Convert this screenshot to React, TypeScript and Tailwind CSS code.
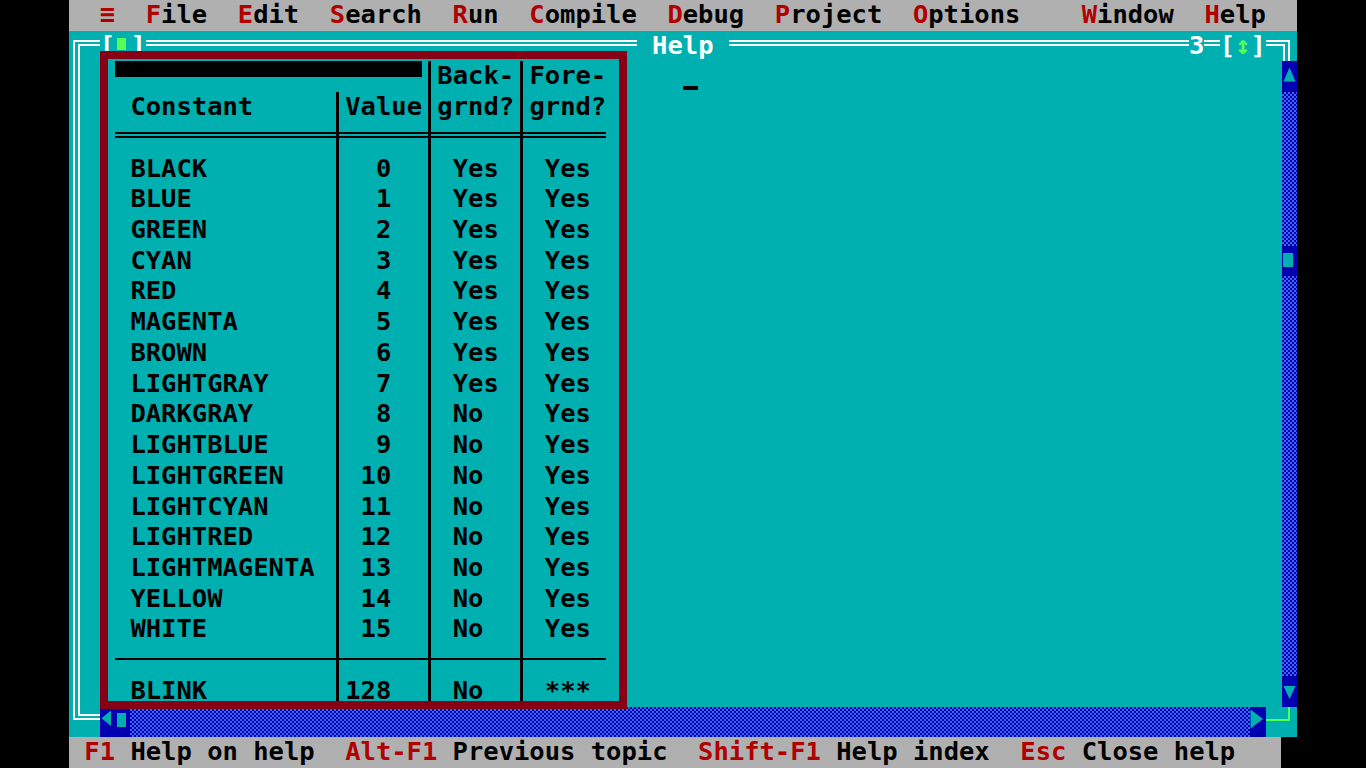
import React from "react";

const menu = [
  { col: "col-start-6 col-end-10", hot: "F", rest: "ile" },
  { col: "col-start-12 col-end-16", hot: "E", rest: "dit" },
  { col: "col-start-18 col-end-24", hot: "S", rest: "earch" },
  { col: "col-start-26 col-end-29", hot: "R", rest: "un" },
  { col: "col-start-31 col-end-38", hot: "C", rest: "ompile" },
  { col: "col-start-40 col-end-45", hot: "D", rest: "ebug" },
  { col: "col-start-47 col-end-54", hot: "P", rest: "roject" },
  { col: "col-start-56 col-end-63", hot: "O", rest: "ptions" },
  { col: "col-start-67 col-end-73", hot: "W", rest: "indow" },
  { col: "col-start-75 col-end-79", hot: "H", rest: "elp" },
];

const keys = [
  { kc: "col-start-2 col-end-4", k: "F1", lc: "col-start-5 col-end-17", l: "Help on help" },
  { kc: "col-start-19 col-end-25", k: "Alt-F1", lc: "col-start-26 col-end-40", l: "Previous topic" },
  { kc: "col-start-42 col-end-50", k: "Shift-F1", lc: "col-start-51 col-end-61", l: "Help index" },
  { kc: "col-start-63 col-end-66", k: "Esc", lc: "col-start-67 col-end-77", l: "Close help" },
];

const colors: [string, string, string, string][] = [
  ["BLACK", "0", "Yes", "Yes"],
  ["BLUE", "1", "Yes", "Yes"],
  ["GREEN", "2", "Yes", "Yes"],
  ["CYAN", "3", "Yes", "Yes"],
  ["RED", "4", "Yes", "Yes"],
  ["MAGENTA", "5", "Yes", "Yes"],
  ["BROWN", "6", "Yes", "Yes"],
  ["LIGHTGRAY", "7", "Yes", "Yes"],
  ["DARKGRAY", "8", "No", "Yes"],
  ["LIGHTBLUE", "9", "No", "Yes"],
  ["LIGHTGREEN", "10", "No", "Yes"],
  ["LIGHTCYAN", "11", "No", "Yes"],
  ["LIGHTRED", "12", "No", "Yes"],
  ["LIGHTMAGENTA", "13", "No", "Yes"],
  ["YELLOW", "14", "No", "Yes"],
  ["WHITE", "15", "No", "Yes"],
];

// one text-mode row: 80 character cells
const ROW = "grid h-[30.72px] grid-cols-[repeat(80,15.35px)] grid-rows-[30.72px]";
const CHECKER =
  "bg-[#0000b0] bg-[image:repeating-conic-gradient(#3868f0_0_25%,transparent_0_50%)] bg-[length:4px_4px] bg-size-[4px_4px]";

function MenuBar() {
  return (
    <div className={`${ROW} bg-[#b0b0b0] text-black`}>
      <span className="col-start-3 col-end-5 row-start-1 text-[#b00000]">≡</span>
      {menu.map((m) => (
        <span key={m.hot + m.rest} className={`${m.col} row-start-1 whitespace-pre`}>
          <span className="text-[#b00000]">{m.hot}</span>
          {m.rest}
        </span>
      ))}
    </div>
  );
}

function TopBorder() {
  return (
    <div className={`${ROW} text-white`}>
      <div className="col-start-1 row-start-1 flex flex-col pl-[4px] pt-[9.5px]">
        <div className="flex flex-1 flex-col border-l-2 border-t-2 border-white pl-[3px] pt-[2px]">
          <div className="flex-1 border-l-2 border-t-2 border-white" />
        </div>
      </div>
      <div className="col-start-2 col-end-80 row-start-1 mt-[9.5px] h-[6px] border-y-2 border-white" />
      <span className="col-start-3 row-start-1 bg-[#00b0b0]">[</span>
      <div className="col-start-4 row-start-1 bg-[#00b0b0] pl-[2px] pt-[7px]">
        <div className="h-[12px] w-[9px] bg-[#55ff55]" />
      </div>
      <span className="col-start-5 row-start-1 bg-[#00b0b0]">]</span>
      <span className="col-start-38 col-end-44 row-start-1 whitespace-pre bg-[#00b0b0]"> Help </span>
      <span className="col-start-74 row-start-1 bg-[#00b0b0]">3</span>
      <span className="col-start-76 row-start-1 bg-[#00b0b0]">[</span>
      <span className="col-start-77 row-start-1 bg-[#00b0b0] text-[#55ff55]">↕</span>
      <span className="col-start-78 row-start-1 bg-[#00b0b0]">]</span>
      <div className="col-start-80 row-start-1 flex flex-col pt-[9.5px]">
        <div className="flex w-[9px] flex-1 flex-col border-r-2 border-t-2 border-white pt-[2px]">
          <div className="w-[4px] flex-1 border-r-2 border-t-2 border-white" />
        </div>
      </div>
    </div>
  );
}

function VLine({ on = true }: { on?: boolean }) {
  return (
    <div className="flex w-[15.35px] shrink-0 pl-[6px]">
      {on && <div className="w-[3px] bg-black" />}
    </div>
  );
}

function Cells({
  a,
  b,
  c,
  d,
  l1 = true,
  header = false,
}: {
  a?: string;
  b?: string;
  c?: string;
  d?: string;
  l1?: boolean;
  header?: boolean;
}) {
  return (
    <div className="col-start-1 row-start-1 flex whitespace-pre">
      <div className="w-[214.9px] shrink-0 pl-[15.35px]">{a}</div>
      <VLine on={l1} />
      <div className={header ? "w-[76.75px] shrink-0" : "w-[76.75px] shrink-0 pr-[30.7px] text-right"}>{b}</div>
      <VLine />
      <div className={header ? "w-[76.75px] shrink-0" : "w-[76.75px] shrink-0 pl-[15.35px]"}>{c}</div>
      <VLine />
      <div className={header ? "w-[76.75px] shrink-0" : "w-[76.75px] shrink-0 pl-[15.35px]"}>{d}</div>
    </div>
  );
}

function Table() {
  return (
    <div className="flex w-[491.2px] shrink-0 flex-col text-black">
      <div className="grid h-[30.72px] grid-cols-1 grid-rows-[30.72px]">
        <div className="col-start-1 row-start-1 h-[15.36px] w-[307px] bg-black" />
        <Cells header l1={false} c="Back-" d="Fore-" />
      </div>
      <div className="grid h-[30.72px] grid-cols-1 grid-rows-[30.72px]">
        <Cells header a="Constant" b="Value" c="grnd?" d="grnd?" />
      </div>
      <div className="grid h-[30.72px] grid-cols-1 grid-rows-[30.72px]">
        <div className="col-start-1 row-start-1 mt-[9px] h-[6px] border-y-2 border-black" />
        <Cells />
      </div>
      {colors.map(([n, v, bg, fg]) => (
        <div key={n} className="grid h-[30.72px] grid-cols-1 grid-rows-[30.72px]">
          <Cells a={n} b={v} c={bg} d={fg} />
        </div>
      ))}
      <div className="grid h-[30.72px] grid-cols-1 grid-rows-[30.72px]">
        <div className="col-start-1 row-start-1 mt-[13px] h-[2px] bg-black" />
        <Cells />
      </div>
      <div className="grid h-[30.72px] grid-cols-1 grid-rows-[30.72px]">
        <Cells a="BLINK" b="128" c="No" d="***" />
      </div>
    </div>
  );
}

function VScroll() {
  return (
    <div className="flex w-[15.35px] shrink-0 flex-col">
      <div className="h-[30.72px] bg-[#0000b0]">
        <svg width="15" height="30" viewBox="0 0 15 30">
          <polygon points="1.5,20.5 13.5,20.5 7.5,6.5" fill="#00b0b0" />
        </svg>
      </div>
      <div className={`h-[153.6px] ${CHECKER}`} />
      <div className="h-[30.72px] bg-[#0000b0] pl-[1.5px] pt-[7px]">
        <div className="h-[14px] w-[10px] bg-[#00b0b0]" />
      </div>
      <div className={`flex-1 ${CHECKER}`} />
      <div className="h-[30.72px] bg-[#0000b0]">
        <svg width="15" height="30" viewBox="0 0 15 30">
          <polygon points="1.5,10 13.5,10 7.5,23" fill="#00b0b0" />
        </svg>
      </div>
    </div>
  );
}

function BottomBorder() {
  return (
    <div className={ROW}>
      <div className="col-start-1 row-start-1 pl-[4px]">
        <div className="h-[13.5px] border-b-2 border-l-2 border-white pl-[3px]">
          <div className="h-[9.5px] border-b-2 border-l-2 border-white" />
        </div>
      </div>
      <div className="col-start-2 row-start-1 mt-[7.5px] h-[6px] border-y-2 border-white" />
      <div className="col-start-3 row-start-1 bg-[#0000b0]">
        <svg width="15" height="30" viewBox="0 0 15 30">
          <polygon points="11,3.5 11,19 1.5,11.25" fill="#00b0b0" />
        </svg>
      </div>
      <div className="col-start-4 row-start-1 bg-[#0000b0] pl-[2px] pt-[6.5px]">
        <div className="h-[14px] w-[9px] bg-[#00b0b0]" />
      </div>
      <div className={`col-start-5 col-end-78 row-start-1 ${CHECKER}`} />
      <div className="col-start-78 row-start-1 bg-[#0000b0]">
        <svg width="15" height="30" viewBox="0 0 15 30">
          <polygon points="0.5,2.5 0.5,21.5 13,12" fill="#00b0b0" />
        </svg>
      </div>
      <div className="col-start-79 row-start-1 mt-[12.5px] h-[2px] bg-[#55ff55]" />
      <div className="col-start-80 row-start-1 h-[14.5px] w-[8.5px] border-b-2 border-r-2 border-[#55ff55]" />
    </div>
  );
}

function StatusBar() {
  return (
    <div className={`${ROW} text-black`}>
      <div className="col-start-1 col-end-80 row-start-1 bg-[#b0b0b0]" />
      {keys.map((s) => (
        <React.Fragment key={s.k}>
          <span className={`${s.kc} row-start-1 whitespace-pre text-[#b00000]`}>{s.k}</span>
          <span className={`${s.lc} row-start-1 whitespace-pre`}>{s.l}</span>
        </React.Fragment>
      ))}
    </div>
  );
}

export default function App() {
  return (
    <div className="flex h-[768px] w-full justify-center overflow-hidden bg-black">
      <div className="relative flex w-[1228px] flex-col font-['DejaVu_Sans_Mono',monospace] text-[25.5px] leading-[29px] font-bold">
        <MenuBar />
        <div className="flex flex-col bg-[#00b0b0]">
          <TopBorder />
          <div className="flex h-[645.12px]">
            <div className="flex w-[15.35px] shrink-0 gap-[3px] pl-[4px]">
              <div className="w-[2px] bg-white" />
              <div className="w-[2px] bg-white" />
            </div>
            <div className="flex flex-1 pl-[30.7px]">
              <Table />
              <div className="ml-[76.75px] mt-[24.6px] h-[4px] w-[15.35px] bg-black" />
            </div>
            <VScroll />
          </div>
          <BottomBorder />
        </div>
        <StatusBar />

        {/* annotation frame drawn over the help table */}
        <div className="pointer-events-none absolute left-[31px] top-[51px] h-[658px] w-[527px] border-8 border-[#880015]" />
      </div>
    </div>
  );
}
